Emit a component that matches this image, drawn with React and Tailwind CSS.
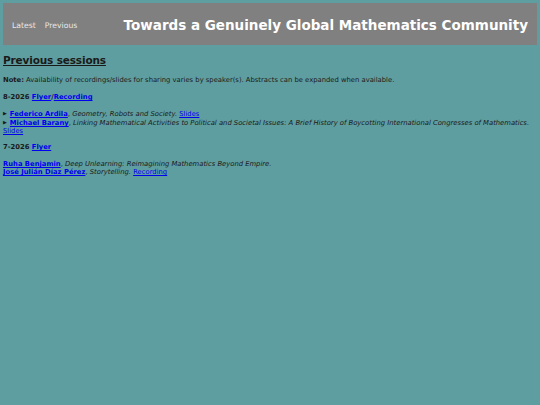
const link = 'text-[#0000ee] underline';

function Talk({ speaker, title, extra, details }) {
  const body = (
    <>
      <a href="#" className={`${link} font-bold`}>{speaker}</a>
      , <i>{title}</i>
      {extra && (
        <>
          {' '}
          <a href="#" className={link}>{extra}</a>
        </>
      )}
    </>
  );
  if (!details) return <div>{body}</div>;
  return (
    <div>
      <span className="text-[5px] align-[1px] mr-[3px]">▶</span>
      {body}
    </div>
  );
}

export default function App() {
  return (
    <div className="min-h-[405px] bg-[#5f9ea0] p-[3px] font-['DejaVu_Sans',sans-serif] text-[#1a1a1a]">
      {/* Header */}
      <div className="h-[42px] bg-[#808080] flex items-center justify-between pl-[9px] pr-[9px] pt-[3px]">
        <nav className="flex gap-[9px] text-[7.7px] text-[#e8e8e8]">
          <a href="#">Latest</a>
          <a href="#">Previous</a>
        </nav>
        <h1 className="text-[13.5px] font-bold text-white">
          Towards a Genuinely Global Mathematics Community
        </h1>
      </div>

      <div className="text-[6.8px] leading-[8px]">
        <h2 className="mt-[9px] text-[10.5px] leading-[13px] font-bold underline tracking-[-0.15px]">
          Previous sessions
        </h2>

        <p className="mt-[9px]">
          <b>Note:</b> Availability of recordings/slides for sharing varies by speaker(s). Abstracts can be
          expanded when available.
        </p>

        <p className="mt-[9px] font-bold">
          8-2026 <a href="#" className={link}>Flyer</a>/<a href="#" className={link}>Recording</a>
        </p>

        <div className="mt-[8px]">
          <Talk details speaker="Federico Ardila" title="Geometry, Robots and Society." extra="Slides" />
          <Talk
            details
            speaker="Michael Barany"
            title="Linking Mathematical Activities to Political and Societal Issues: A Brief History of Boycotting International Congresses of Mathematics."
          />
          <div>
            <a href="#" className={link}>Slides</a>
          </div>
        </div>

        <p className="mt-[8px] font-bold">
          7-2026 <a href="#" className={link}>Flyer</a>
        </p>

        <div className="mt-[9px]">
          <Talk speaker="Ruha Benjamin" title="Deep Unlearning: Reimagining Mathematics Beyond Empire." />
          <Talk speaker="José Julián Díaz Pérez" title="Storytelling." extra="Recording" />
        </div>
      </div>
    </div>
  );
}
